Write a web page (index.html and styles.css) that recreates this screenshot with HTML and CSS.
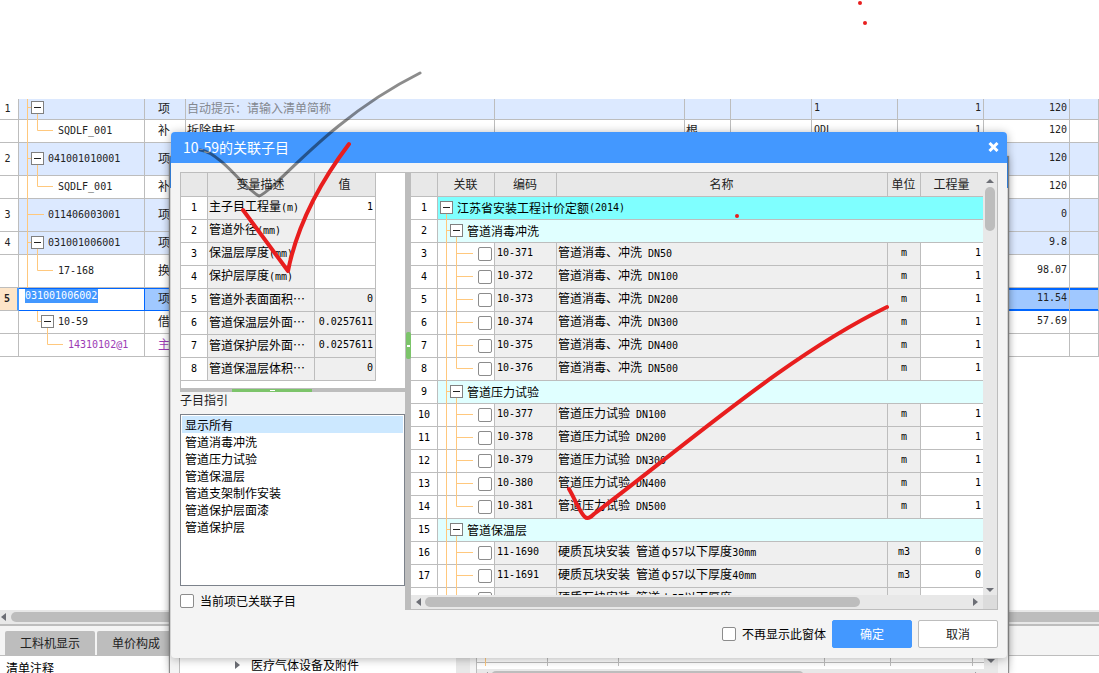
FILE: index.html
```html
<!DOCTYPE html>
<html lang="zh-CN">
<head>
<meta charset="utf-8">
<title>10-59的关联子目</title>
<link rel="stylesheet" href="styles.css">
</head>
<body>
<svg class="defs" aria-hidden="true">
  <symbol id="group" viewBox="0 0 12 23"><path d="M8.5 0V23M8 10.5H12"/></symbol>
  <symbol id="leaf" viewBox="0 0 40 23"><path d="M8.5 0V23M18.5 0V23M18 10.5H35"/></symbol>
  <symbol id="last" viewBox="0 0 40 23"><path d="M8.5 0V23M18.5 0V10.5H35"/></symbol>
</svg>

<main class="app">
  <div class="blank"></div>
  <div class="sheet-area">
    <table class="grid sheet">
      <colgroup><col class="s-no"><col class="s-code"><col class="s-kind"><col class="s-name"><col class="s-spec"><col class="s-unit"><col class="s-a"><col class="s-b"><col class="s-b"><col class="s-b"><col></colgroup>
      <tbody>
      <tr class="item h21"><td class="no n">1</td><td><div class="node"><svg class="guide" width="12" height="21"><path d="M8.5 0V21M8 8.5H12"/></svg><button class="box" aria-label="折叠"></button></div></td><td class="kind">项</td><td class="hint">自动提示：请输入清单简称</td><td></td><td></td><td></td><td class="n">1</td><td class="n num">1</td><td class="n num">120</td><td></td></tr>
      <tr class="h23"><td class="no"></td><td><div class="node"><svg class="guide" width="39" height="23"><path d="M8.5 0V23M18.5 0V10.5H34"/></svg><span class="n">SQDLF_001</span></div></td><td class="kind">补</td><td>拆除电杆</td><td></td><td>根</td><td></td><td class="n">QDL</td><td class="n num">1</td><td class="n num">120</td><td></td></tr>
      <tr class="item h33"><td class="no n">2</td><td><div class="node"><svg class="guide" width="12" height="33"><path d="M8.5 0V33M8 15.5H12"/></svg><button class="box long" aria-label="折叠"></button><span class="n">041001010001</span></div></td><td class="kind">项</td><td></td><td></td><td></td><td></td><td></td><td></td><td class="n num">120</td><td></td></tr>
      <tr class="h23"><td class="no"></td><td><div class="node"><svg class="guide" width="39" height="23"><path d="M8.5 0V23M18.5 0V10.5H34"/></svg><span class="n">SQDLF_001</span></div></td><td class="kind">补</td><td></td><td></td><td></td><td></td><td></td><td></td><td class="n num">120</td><td></td></tr>
      <tr class="item h33"><td class="no n">3</td><td><div class="node"><svg class="guide" width="29" height="33"><path d="M8.5 0V33M8 15.5H25"/></svg><span class="n">011406003001</span></div></td><td class="kind">项</td><td></td><td></td><td></td><td></td><td></td><td></td><td class="n num">0</td><td></td></tr>
      <tr class="item h23"><td class="no n">4</td><td><div class="node"><svg class="guide" width="12" height="23"><path d="M8.5 0V23M8 10.5H12"/></svg><button class="box" aria-label="折叠"></button><span class="n">031001006001</span></div></td><td class="kind">项</td><td></td><td></td><td></td><td></td><td></td><td></td><td class="n num">9.8</td><td></td></tr>
      <tr class="h33"><td class="no"></td><td><div class="node"><svg class="guide" width="39" height="33"><path d="M8.5 0V33M18.5 0V15.5H34"/></svg><span class="n">17-168</span></div></td><td class="kind">换</td><td></td><td></td><td></td><td></td><td></td><td></td><td class="n num">98.07</td><td></td></tr>
      <tr class="current h23"><td class="no n">5</td><td class="edit"><input class="code-edit" aria-label="编码" value="031001006002"></td><td class="kind">项</td><td></td><td></td><td></td><td></td><td></td><td></td><td class="n num">11.54</td><td></td></tr>
      <tr class="h23"><td class="no"></td><td><div class="node"><svg class="guide" width="22" height="23"><path d="M18.5 0V10.5H22"/></svg><button class="box" aria-label="折叠"></button><span class="n">10-59</span></div></td><td class="kind">借</td><td></td><td></td><td></td><td></td><td></td><td></td><td class="n num">57.69</td><td></td></tr>
      <tr class="material h23"><td class="no"></td><td><div class="node"><svg class="guide" width="49" height="23"><path d="M28.5 0V10.5H44"/></svg><span class="n">14310102@1</span></div></td><td class="kind">主</td><td></td><td></td><td></td><td></td><td></td><td></td><td></td><td></td></tr>
      </tbody>
    </table>
  </div>
  <div class="hscroll wide"><i class="tri left"></i><i class="thumb"></i></div>
  <nav class="tabs"><button>工料机显示</button><button>单价构成</button></nav>
  <div class="note">清单注释</div>
</main>

<section class="back-window">
  <div class="back-title"></div>
  <div class="back-body">
    <div class="back-tree"><i class="tri right"></i><span>医疗气体设备及附件</span></div>
    <div class="back-bar"></div>
    <div class="back-table">
      <div class="back-cells"><i></i><i></i><i></i><i></i><i></i><i></i><i></i></div>
      <div class="hscroll"><i class="tri left"></i><i class="thumb"></i><i class="space"></i><i class="tri right"></i></div>
    </div>
    <div class="back-bar right"><i class="tri down"></i></div>
  </div>
</section>

<section class="dialog" role="dialog" aria-labelledby="dialog-title">
  <header class="title"><h1 id="dialog-title">10-59的关联子目</h1><button class="close" aria-label="关闭"><svg width="11" height="10" viewBox="0 0 11 10"><path d="M1.5 1L9.5 9M9.5 1L1.5 9"/></svg></button></header>
  <div class="panes">
    <aside class="side">
      <div class="vars">
        <table class="grid">
          <colgroup><col class="v-no"><col class="v-name"><col class="v-value"></colgroup>
          <thead><tr><th></th><th>变量描述</th><th>值</th></tr></thead>
          <tbody>
          <tr><td class="no n">1</td><td class="fix">主子目工程量<span class="n">(m)</span></td><td class="n num">1</td></tr>
          <tr><td class="no n">2</td><td class="fix">管道外径<span class="n">(mm)</span></td><td></td></tr>
          <tr><td class="no n">3</td><td class="fix">保温层厚度<span class="n">(mm)</span></td><td></td></tr>
          <tr><td class="no n">4</td><td class="fix">保护层厚度<span class="n">(mm)</span></td><td></td></tr>
          <tr><td class="no n">5</td><td class="fix">管道外表面面积…</td><td class="fix n num">0</td></tr>
          <tr><td class="no n">6</td><td class="fix">管道保温层外面…</td><td class="fix n num">0.0257611</td></tr>
          <tr><td class="no n">7</td><td class="fix">管道保护层外面…</td><td class="fix n num">0.0257611</td></tr>
          <tr><td class="no n">8</td><td class="fix">管道保温层体积…</td><td class="fix n num">0</td></tr>
          </tbody>
        </table>
      </div>
      <div class="split-h"><i></i></div>
      <label class="guide-label" for="guide-list">子目指引</label>
      <select class="guide-list" id="guide-list" size="10">
        <option selected>显示所有</option>
        <option>管道消毒冲洗</option>
        <option>管道压力试验</option>
        <option>管道保温层</option>
        <option>管道支架制作安装</option>
        <option>管道保护层面漆</option>
        <option>管道保护层</option>
      </select>
      <label class="check"><input type="checkbox">当前项已关联子目</label>
    </aside>
    <div class="split-v"><i></i></div>
    <div class="result">
      <div class="view">
        <div class="clip">
        <table class="grid">
          <colgroup><col class="r-no"><col class="r-link"><col class="r-code"><col><col class="r-unit"><col class="r-qty"></colgroup>
          <thead><tr><th></th><th>关联</th><th>编码</th><th>名称</th><th>单位</th><th>工程量</th></tr></thead>
          <tbody>
          <tr class="root"><td class="no n">1</td><td colspan="5"><div class="node"><button class="box" aria-label="折叠"></button>江苏省安装工程计价定额<span class="n">(2014)</span></div></td></tr>
          <tr class="group"><td class="no n">2</td><td colspan="5"><div class="node"><svg class="guide" width="12" height="23"><use href="#group"/></svg><button class="box" aria-label="折叠"></button>管道消毒冲洗</div></td></tr>
          <tr><td class="no n">3</td><td><div class="node"><svg class="guide" width="40" height="23"><use href="#leaf"/></svg><input type="checkbox" aria-label="10-371"></div></td><td class="fix n">10-371</td><td class="fix">管道消毒、冲洗<span class="n"> DN50</span></td><td class="fix n unit">m</td><td class="n num">1</td></tr>
          <tr><td class="no n">4</td><td><div class="node"><svg class="guide" width="40" height="23"><use href="#leaf"/></svg><input type="checkbox" aria-label="10-372"></div></td><td class="fix n">10-372</td><td class="fix">管道消毒、冲洗<span class="n"> DN100</span></td><td class="fix n unit">m</td><td class="n num">1</td></tr>
          <tr><td class="no n">5</td><td><div class="node"><svg class="guide" width="40" height="23"><use href="#leaf"/></svg><input type="checkbox" aria-label="10-373"></div></td><td class="fix n">10-373</td><td class="fix">管道消毒、冲洗<span class="n"> DN200</span></td><td class="fix n unit">m</td><td class="n num">1</td></tr>
          <tr><td class="no n">6</td><td><div class="node"><svg class="guide" width="40" height="23"><use href="#leaf"/></svg><input type="checkbox" aria-label="10-374"></div></td><td class="fix n">10-374</td><td class="fix">管道消毒、冲洗<span class="n"> DN300</span></td><td class="fix n unit">m</td><td class="n num">1</td></tr>
          <tr><td class="no n">7</td><td><div class="node"><svg class="guide" width="40" height="23"><use href="#leaf"/></svg><input type="checkbox" aria-label="10-375"></div></td><td class="fix n">10-375</td><td class="fix">管道消毒、冲洗<span class="n"> DN400</span></td><td class="fix n unit">m</td><td class="n num">1</td></tr>
          <tr><td class="no n">8</td><td><div class="node"><svg class="guide" width="40" height="23"><use href="#last"/></svg><input type="checkbox" aria-label="10-376"></div></td><td class="fix n">10-376</td><td class="fix">管道消毒、冲洗<span class="n"> DN500</span></td><td class="fix n unit">m</td><td class="n num">1</td></tr>
          <tr class="group"><td class="no n">9</td><td colspan="5"><div class="node"><svg class="guide" width="12" height="23"><use href="#group"/></svg><button class="box" aria-label="折叠"></button>管道压力试验</div></td></tr>
          <tr><td class="no n">10</td><td><div class="node"><svg class="guide" width="40" height="23"><use href="#leaf"/></svg><input type="checkbox" aria-label="10-377"></div></td><td class="fix n">10-377</td><td class="fix">管道压力试验<span class="n"> DN100</span></td><td class="fix n unit">m</td><td class="n num">1</td></tr>
          <tr><td class="no n">11</td><td><div class="node"><svg class="guide" width="40" height="23"><use href="#leaf"/></svg><input type="checkbox" aria-label="10-378"></div></td><td class="fix n">10-378</td><td class="fix">管道压力试验<span class="n"> DN200</span></td><td class="fix n unit">m</td><td class="n num">1</td></tr>
          <tr><td class="no n">12</td><td><div class="node"><svg class="guide" width="40" height="23"><use href="#leaf"/></svg><input type="checkbox" aria-label="10-379"></div></td><td class="fix n">10-379</td><td class="fix">管道压力试验<span class="n"> DN300</span></td><td class="fix n unit">m</td><td class="n num">1</td></tr>
          <tr><td class="no n">13</td><td><div class="node"><svg class="guide" width="40" height="23"><use href="#leaf"/></svg><input type="checkbox" aria-label="10-380"></div></td><td class="fix n">10-380</td><td class="fix">管道压力试验<span class="n"> DN400</span></td><td class="fix n unit">m</td><td class="n num">1</td></tr>
          <tr><td class="no n">14</td><td><div class="node"><svg class="guide" width="40" height="23"><use href="#last"/></svg><input type="checkbox" aria-label="10-381"></div></td><td class="fix n">10-381</td><td class="fix">管道压力试验<span class="n"> DN500</span></td><td class="fix n unit">m</td><td class="n num">1</td></tr>
          <tr class="group"><td class="no n">15</td><td colspan="5"><div class="node"><svg class="guide" width="12" height="23"><use href="#group"/></svg><button class="box" aria-label="折叠"></button>管道保温层</div></td></tr>
          <tr><td class="no n">16</td><td><div class="node"><svg class="guide" width="40" height="23"><use href="#leaf"/></svg><input type="checkbox" aria-label="11-1690"></div></td><td class="fix n">11-1690</td><td class="fix">硬质瓦块安装<span class="n"> </span>管道<span class="phi">φ</span><span class="n">57</span>以下厚度<span class="n">30mm</span></td><td class="fix n unit">m3</td><td class="n num">0</td></tr>
          <tr><td class="no n">17</td><td><div class="node"><svg class="guide" width="40" height="23"><use href="#leaf"/></svg><input type="checkbox" aria-label="11-1691"></div></td><td class="fix n">11-1691</td><td class="fix">硬质瓦块安装<span class="n"> </span>管道<span class="phi">φ</span><span class="n">57</span>以下厚度<span class="n">40mm</span></td><td class="fix n unit">m3</td><td class="n num">0</td></tr>
          <tr><td class="no"></td><td><div class="node"><svg class="guide" width="40" height="23"><use href="#leaf"/></svg><input type="checkbox" aria-label="18"></div></td><td class="fix"></td><td class="fix">硬质瓦块安装<span class="n"> </span>管道<span class="phi">φ</span><span class="n">57</span>以下厚度</td><td class="fix"></td><td></td></tr>
          </tbody>
        </table>
        </div>
        <div class="vscroll"><i class="tri up"></i><i class="thumb"></i><i class="space"></i><i class="tri down"></i></div>
      </div>
      <div class="hscroll"><i class="tri left"></i><i class="thumb"></i><i class="space"></i><i class="tri right"></i><i class="corner"></i></div>
    </div>
  </div>
  <footer class="actions">
    <label class="check"><input type="checkbox">不再显示此窗体</label>
    <button class="btn primary">确定</button>
    <button class="btn">取消</button>
  </footer>
</section>

<svg class="ink" width="1099" height="673" viewBox="0 0 1099 673" aria-hidden="true">
  <path class="pencil" d="M200 150C213 151 230 169 243 183Q255 194 259 196Q263 195 275 184C310 150 354 106 420 73"/>
  <path class="red" d="M243 210L288 271C297 226 318 185 349 144"/>
  <path class="red" d="M569 489C575 499 580 513 585 517Q588 520 594 514C697 436 790 354 887 307"/>
  <circle cx="860" cy="3" r="2"/><circle cx="865" cy="23" r="2"/><circle cx="737" cy="216" r="2"/>
</svg>
</body>
</html>
```
FILE: styles.css
```css
* { box-sizing: border-box; }
body {
  margin: 0;
  position: relative;
  height: 100vh;
  overflow: hidden;
  background: #fff;
  color: #222;
  font: 12px/18px "Noto Sans CJK SC", sans-serif;
}
button, input, select { font: inherit; color: inherit; margin: 0; }
.defs { position: absolute; width: 0; height: 0; }
i { display: block; flex: none; }
.n { font-family: "DejaVu Sans Mono", "Noto Sans CJK SC", monospace; font-size: 10px; }

/* shared grid */
.grid { width: 100%; table-layout: fixed; border-collapse: separate; border-spacing: 0; }
.grid td, .grid th {
  height: 23px;
  padding: 0 2px 2px 1px;
  overflow: hidden;
  border: solid #bdbdbd;
  border-width: 0 1px 1px 0;
  white-space: nowrap;
  text-align: left;
  font-weight: 400;
}
.grid th { height: 25px; border-top-width: 1px; background: #e8e8e8; text-align: center; }
.grid .no { padding: 0; text-align: center; background: #fff; }
.grid .num { text-align: right; }
.grid .unit { text-align: center; }
.grid .fix { background: #efefef; }
.grid td.n { padding-left: 2px; }
.grid td.no { padding: 0; }
.grid td:has(.node) { padding: 0; overflow: visible; vertical-align: top; }
.dialog tbody { color: #000; }
.node { display: flex; align-items: center; height: 21px; white-space: pre; }
.guide { flex: none; display: block; align-self: flex-start; fill: none; stroke: #ffc87d; stroke-width: 1; }
.box {
  position: relative;
  flex: none;
  width: 13px;
  height: 13px;
  margin-right: 4px;
  padding: 0;
  border: 1px solid #808080;
  background: linear-gradient(#222, #222) center / 7px 1px no-repeat #fff;
}
.box::after {
  content: "";
  position: absolute;
  left: 5px;
  top: 12px;
  height: 6px;
  border-left: 1px solid #ffc87d;
}
.box.long::after { height: 11px; }
input[type="checkbox"] {
  appearance: none;
  flex: none;
  width: 14px;
  height: 14px;
  border: 1px solid #8c8c8c;
  border-radius: 2px;
  background: #fff;
}
.phi { display: inline-block; width: 12px; text-align: center; }

/* arrows and scroll bars */
.tri { border: 4px solid transparent; }
.tri.left { border-width: 4px 5px 4px 0; border-right-color: #6c6e75; }
.tri.right { border-width: 4px 0 4px 5px; border-left-color: #6c6e75; }
.tri.up { border-width: 0 4px 4px; border-bottom-color: #6c6e75; }
.tri.down { border-width: 4px 4px 0; border-top-color: #6c6e75; }
.hscroll { display: flex; align-items: center; height: 14px; flex: none; background: #e8e8e8; }
.thumb { background: #bdbdbd; border-radius: 5px; }
.hscroll .thumb { height: 10px; }
.space { flex: 1; }

/* main sheet */
.app { display: flex; flex-direction: column; height: 100%; }
.blank { height: 99px; flex: none; }
.sheet-area { flex: 1; min-height: 0; overflow: hidden; }
.s-no { width: 19px; }
.s-code { width: 126px; }
.s-kind { width: 41px; }
.s-name { width: 309px; }
.s-spec { width: 190px; }
.s-unit { width: 46px; }
.s-a { width: 81px; }
.s-b { width: 86px; }
.sheet .h21 td { height: 21px; }
.sheet .h33 td { height: 33px; }
.sheet .h21 .node { height: 17px; }
.sheet .h33 .node { height: 31px; }
.sheet .item td { background: #dce9ff; }
.sheet .item .no { background: #fff; }
.sheet td.no { padding-right: 3px; }
.sheet td.kind { padding-left: 13px; }
.sheet .hint { color: #84888f; }
.sheet .material { color: #9c3bb5; }
.sheet .current td { background: #a0c8ff; border-bottom-color: #0066ff; box-shadow: inset 0 1px #0066ff; }
.sheet .current .num, .sheet .current td:last-child { box-shadow: inset 0 2px #0066ff, inset 0 -1px #0066ff; }
.sheet .current .no { background: #fde5c8; border-color: #bdbdbd; border-right: 2px solid #4398ff; box-shadow: none; font-weight: 700; }
.sheet .current .edit { padding: 0 6px; background: #fff; border-right-color: #0066ff; vertical-align: top; }
.code-edit {
  display: block;
  width: 73px;
  height: 14px;
  margin-top: 1px;
  padding: 0;
  border: 0;
  background: #4398ff;
  color: #fff;
  font: 10px/14px "DejaVu Sans Mono", monospace;
}
.hscroll.wide { padding-left: 1px; }
.wide .thumb { flex: 1; margin-left: 5px; border-radius: 5px 0 0 5px; }
.tabs {
  display: flex;
  align-items: flex-end;
  gap: 2px;
  height: 32px;
  flex: none;
  padding-left: 5px;
  background: #f4f4f4;
  border-top: 2px solid #bdbdbd;
  border-bottom: 1px solid #bdbdbd;
}
.tabs button { height: 24px; padding: 0 15px; border: 0; border-radius: 2px 2px 0 0; background: #bdbdbd; }
.note { height: 17px; flex: none; padding: 3px 6px; color: #000; }

/* window below the dialog */
.back-window {
  position: absolute;
  left: 170px;
  right: 91px;
  top: 157px;
  bottom: 0;
  display: flex;
  flex-direction: column;
  justify-content: space-between;
  background: #f4f4f4;
  box-shadow: 0 0 1px 1px #8c8c8c, 0 0 8px rgba(0, 0, 0, .3);
}
.back-title { height: 31px; background: #3b8ef0; }
.back-body { display: flex; height: 18px; padding: 0 10px 0 9px; }
.back-tree { display: flex; align-items: center; gap: 11px; width: 277px; padding: 2px 0 0 55px; border-left: 1px solid #bdbdbd; background: #fff; color: #000; }
.back-bar { width: 14px; background: #e8e8e8; }
.back-bar.right { width: 14px; padding: 4px 3px; }
.back-table { flex: 1; min-width: 0; margin-left: 6px; border-left: 1px solid #bdbdbd; background: #fff; overflow: hidden; }
.back-cells { display: flex; height: 11px; background: linear-gradient(#bdbdbd, #bdbdbd) 0 7px / 100% 1px no-repeat; }
.back-cells i { border-right: 1px solid #bdbdbd; width: 82px; }
.back-cells i:nth-child(1) { width: 9px; border-color: #ffc87d; }
.back-cells i:nth-child(2) { width: 62px; }
.back-cells i:nth-child(3) { width: 71px; }
.back-cells i:nth-child(4) { flex: 1; }
.back-cells i:nth-child(5) { width: 66px; }
.back-cells i:nth-child(7) { width: 11px; border: 0; }
.back-table .hscroll { margin-top: 3px; padding: 0 4px 0 6px; }
.back-table .thumb { width: 63%; margin-left: 3px; }

/* dialog */
.dialog {
  position: absolute;
  left: 171px;
  right: 92px;
  top: 132px;
  border-radius: 4px;
  background: #f4f4f4;
  box-shadow: 0 1px 10px rgba(0, 0, 0, .3);
  overflow: hidden;
}
.title { display: flex; align-items: center; justify-content: space-between; height: 31px; padding: 0 4px 1px 12px; background: #4398ff; color: #fff; }
.title h1 { margin: 0; font-size: 14px; line-height: 20px; font-weight: 400; }
.close { width: 20px; height: 20px; padding: 0; border: 0; background: none; }
.close svg { display: block; margin: auto; fill: none; stroke: #fff; stroke-width: 3; }
.panes { display: flex; height: 438px; margin: 9px 9px 0; }
.side { display: flex; flex-direction: column; width: 225px; flex: none; }
.vars { height: 216px; flex: none; border: solid #bdbdbd; border-width: 1px 0 0 1px; background: #fff; }
.vars .grid { width: 195px; }
.vars .grid th { height: 24px; border-top: 0; }
.v-no { width: 27px; }
.v-name { width: 107px; }
.v-value { width: 61px; }
.split-h { display: flex; height: 4px; flex: none; align-items: flex-end; justify-content: center; padding-right: 41px; background: #bdbdbd; }
.split-h i { width: 80px; height: 3px; background: linear-gradient(#fff, #fff) center / 5px 1px no-repeat #7cc46a; }
.guide-label { height: 23px; line-height: 16px; }
.guide-list {
  width: 225px;
  height: 172px;
  flex: none;
  padding: 1px;
  border: 1px solid #7c828b;
  border-radius: 0;
  background: #fff;
  color: #000;
  overflow: hidden;
  outline: 0;
}
.guide-list option { height: 17px; min-height: 17px; padding: 0 3px; line-height: 17px; border-radius: 0; }
.guide-list option:checked { background: #cce8ff linear-gradient(#cce8ff, #cce8ff); color: #000; }
.check { display: flex; align-items: center; gap: 6px; color: #000; }
.side .check { margin-top: 6px; }
.split-v { display: flex; align-items: center; justify-content: center; width: 6px; flex: none; padding-bottom: 91px; background: #bdbdbd; }
.split-v i { width: 5px; height: 27px; border-radius: 2px; background: linear-gradient(#fff, #fff) center / 3px 2px no-repeat #7cc46a; }
.result { flex: 1; min-width: 0; border: solid #bdbdbd; border-width: 0 1px 1px 0; background: #fff; }
.view { display: flex; height: 423px; }
.clip { flex: 1; min-width: 0; overflow: hidden; }
.clip th:last-child, .clip td:last-child { border-right: 0; }
.r-no { width: 27px; }
.r-link { width: 57px; }
.r-code { width: 62px; }
.r-unit { width: 33px; }
.r-qty { width: 62px; }
.root td { background: #7fffff; }
.root .node { padding-left: 2px; }
.group td { background: #e0ffff; }
.vscroll { display: flex; flex-direction: column; align-items: center; width: 14px; flex: none; padding: 6px 0 3px; border-top: 1px solid #bdbdbd; background: #e8e8e8; }
.result .vscroll .thumb { width: 10px; height: 44px; margin: 4px 0 0; }
.result .hscroll { padding-left: 5px; }
.result .hscroll .thumb { width: 435px; margin-left: 4px; }
.corner { width: 14px; height: 14px; margin-left: 5px; background: #dcdcdc; }
.actions { display: flex; align-items: center; justify-content: flex-end; gap: 6px; padding: 10px 9px; }
.btn { width: 80px; height: 28px; padding: 0; border: 1px solid #bdbdbd; border-radius: 2px; background: #fff; }
.btn.primary { border-color: #4398ff; background: #4398ff; color: #fff; }

/* pen strokes over the screen */
.ink { position: absolute; left: 0; top: 0; pointer-events: none; fill: none; stroke-linecap: round; stroke-linejoin: round; }
.ink .pencil { stroke: #000; stroke-opacity: .45; stroke-width: 3; }
.ink .red { stroke: #e81e1e; stroke-width: 4; }
.ink circle { fill: #e81e1e; }
```
